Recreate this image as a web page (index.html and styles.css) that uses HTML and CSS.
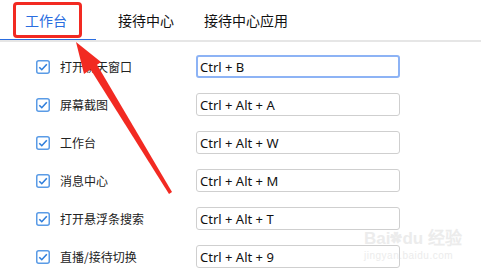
FILE: index.html
```html
<!DOCTYPE html>
<html lang="zh-CN">
<head>
  <meta charset="UTF-8" />
  <title>快捷键设置</title>
  <link rel="stylesheet" href="styles.css">
</head>
<body>
  <div class="page">
    <div class="tabs">
      <div class="tab active">工作台</div>
      <div class="tab tab2">接待中心</div>
      <div class="tab tab3">接待中心应用</div>
    </div>

    <div class="list">
      <div class="row">
        <span class="check"><svg width="14" height="14" viewBox="0 0 14 14"><rect x="0.75" y="0.75" width="12.5" height="12.5" rx="2" fill="#fff" stroke="#5a9be6" stroke-width="1.5"/><path d="M3.3 7.2 L5.8 9.7 L10.8 4.3" fill="none" stroke="#2d7ddb" stroke-width="1.6"/></svg></span>
        <span class="name">打开聊天窗口</span>
        <input class="key focus" type="text" value="Ctrl + B" />
      </div>
      <div class="row">
        <span class="check"><svg width="14" height="14" viewBox="0 0 14 14"><rect x="0.75" y="0.75" width="12.5" height="12.5" rx="2" fill="#fff" stroke="#5a9be6" stroke-width="1.5"/><path d="M3.3 7.2 L5.8 9.7 L10.8 4.3" fill="none" stroke="#2d7ddb" stroke-width="1.6"/></svg></span>
        <span class="name">屏幕截图</span>
        <input class="key" type="text" value="Ctrl + Alt + A" />
      </div>
      <div class="row">
        <span class="check"><svg width="14" height="14" viewBox="0 0 14 14"><rect x="0.75" y="0.75" width="12.5" height="12.5" rx="2" fill="#fff" stroke="#5a9be6" stroke-width="1.5"/><path d="M3.3 7.2 L5.8 9.7 L10.8 4.3" fill="none" stroke="#2d7ddb" stroke-width="1.6"/></svg></span>
        <span class="name">工作台</span>
        <input class="key" type="text" value="Ctrl + Alt + W" />
      </div>
      <div class="row">
        <span class="check"><svg width="14" height="14" viewBox="0 0 14 14"><rect x="0.75" y="0.75" width="12.5" height="12.5" rx="2" fill="#fff" stroke="#5a9be6" stroke-width="1.5"/><path d="M3.3 7.2 L5.8 9.7 L10.8 4.3" fill="none" stroke="#2d7ddb" stroke-width="1.6"/></svg></span>
        <span class="name">消息中心</span>
        <input class="key" type="text" value="Ctrl + Alt + M" />
      </div>
      <div class="row">
        <span class="check"><svg width="14" height="14" viewBox="0 0 14 14"><rect x="0.75" y="0.75" width="12.5" height="12.5" rx="2" fill="#fff" stroke="#5a9be6" stroke-width="1.5"/><path d="M3.3 7.2 L5.8 9.7 L10.8 4.3" fill="none" stroke="#2d7ddb" stroke-width="1.6"/></svg></span>
        <span class="name">打开悬浮条搜索</span>
        <input class="key" type="text" value="Ctrl + Alt + T" />
      </div>
      <div class="row">
        <span class="check"><svg width="14" height="14" viewBox="0 0 14 14"><rect x="0.75" y="0.75" width="12.5" height="12.5" rx="2" fill="#fff" stroke="#5a9be6" stroke-width="1.5"/><path d="M3.3 7.2 L5.8 9.7 L10.8 4.3" fill="none" stroke="#2d7ddb" stroke-width="1.6"/></svg></span>
        <span class="name">直播/接待切换</span>
        <input class="key" type="text" value="Ctrl + Alt + 9" />
      </div>
    </div>

    <!-- 标注：红框和箭头 -->
    <div class="mark-box"></div>
    <svg class="mark-arrow" width="481" height="276" viewBox="0 0 481 276">
      <polygon points="76,42 101,62 84,74" fill="#f22a22"/>
      <polygon points="89,67 96,63 172,192 169,194" fill="#f22a22"/>
    </svg>

    <!-- 水印 -->
    <div class="watermark">
      <div class="wm-top">Bai<span class="paw">✿</span>du 经验</div>
      <div class="wm-url">jingyan.baidu.com</div>
    </div>
  </div>
</body>
</html>
```

FILE: styles.css
```css
body {
  margin: 0;
  background: #fff;
  font-family: "Noto Sans CJK SC", "Noto Sans", sans-serif;
  color: #222;
}
.page {
  position: relative;
  width: 481px;
  height: 276px;
  overflow: hidden;
}
.tabs {
  display: flex;
  height: 40px;
  border-bottom: 2px solid #e6e6e6;
}
.tab {
  font-size: 14px;
  line-height: 40px;
  color: #111;
}
.tab.active {
  width: 71px;
  padding-left: 25px;
  color: #2a6de0;
  border-bottom: 1px solid #2a6de0;
}
.tab2 {
  margin-left: 22px;
}
.tab3 {
  margin-left: 30px;
}
.list {
  display: flex;
  flex-direction: column;
  gap: 15px;
  padding: 13px 0 0 36px;
}
.row {
  display: flex;
  align-items: center;
  height: 23px;
}
.check {
  display: flex;
  width: 14px;
  height: 14px;
}
.name {
  width: 136px;
  margin-left: 10px;
  font-size: 12px;
  color: #222;
}
.key {
  box-sizing: border-box;
  width: 204px;
  height: 23px;
  margin: 0;
  padding: 0 3px;
  border: 1px solid #cfcfcf;
  border-radius: 3px;
  font-family: "Noto Sans", sans-serif;
  font-size: 13px;
  color: #111;
  outline: none;
}
.key.focus {
  border: 2px solid #8db3f5;
  padding: 0 2px;
}
.mark-box {
  position: absolute;
  left: 13px;
  top: 2px;
  width: 63px;
  height: 30px;
  border: 3px solid #f22a22;
  border-radius: 4px;
}
.mark-arrow {
  position: absolute;
  left: 0;
  top: 0;
}
.watermark {
  position: absolute;
  left: 364px;
  top: 228px;
  color: #ececec;
  font-family: "Liberation Sans", sans-serif;
}
.wm-top {
  font-size: 17px;
  font-weight: bold;
  line-height: 22px;
}
.paw {
  font-size: 12px;
  vertical-align: top;
}
.wm-url {
  font-size: 10px;
  line-height: 12px;
  letter-spacing: 0.5px;
}
```
